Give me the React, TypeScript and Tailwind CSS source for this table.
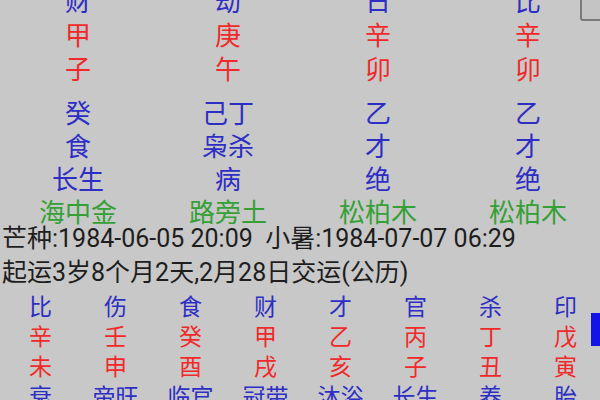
const RED = "text-[#f02a2a]";
const BLUE = "text-[#2e2ec4]";
const GREEN = "text-[#35a035]";

const top: { cells: string[]; color: string; h: string }[] = [
  { cells: ["财", "劫", "日", "比"], color: BLUE, h: "h-[34px]" },
  { cells: ["甲", "庚", "辛", "辛"], color: RED, h: "h-[34px]" },
  { cells: ["子", "午", "卯", "卯"], color: RED, h: "h-[34px]" },
];

const hidden: { cells: string[]; color: string }[] = [
  { cells: ["癸", "己丁", "乙", "乙"], color: BLUE },
  { cells: ["食", "枭杀", "才", "才"], color: BLUE },
  { cells: ["长生", "病", "绝", "绝"], color: BLUE },
  { cells: ["海中金", "路旁土", "松柏木", "松柏木"], color: GREEN },
];

const luck: { cells: string[]; color: string }[] = [
  { cells: ["比", "伤", "食", "财", "才", "官", "杀", "印"], color: BLUE },
  { cells: ["辛", "壬", "癸", "甲", "乙", "丙", "丁", "戊"], color: RED },
  { cells: ["未", "申", "酉", "戌", "亥", "子", "丑", "寅"], color: RED },
  { cells: ["衰", "帝旺", "临官", "冠带", "沐浴", "长生", "养", "胎"], color: BLUE },
];

export default function App() {
  return (
    <div
      className="relative h-[400px] w-[600px] overflow-hidden bg-[#c8c8c8]"
      style={{ fontFamily: 'Roboto, "Noto Sans CJK SC", sans-serif' }}
    >
      {/* four pillars */}
      <div className="-mt-[15px] pl-[3px]">
        {top.map((row, i) => (
          <div key={i} className={`grid grid-cols-[repeat(4,150px)] ${row.h} items-center text-[26px] ${row.color}`}>
            {row.cells.map((c, j) => (
              <div key={j} className="text-center leading-none">{c}</div>
            ))}
          </div>
        ))}
        <div className="h-[10px]" />
        {hidden.map((row, i) => (
          <div key={i} className={`grid h-[33px] grid-cols-[repeat(4,150px)] items-center text-[26px] ${row.color}`}>
            {row.cells.map((c, j) => (
              <div key={j} className="text-center leading-none">{c}</div>
            ))}
          </div>
        ))}
      </div>

      {/* jieqi + qiyun */}
      <div className="-mt-[8px] pl-[2px] text-[25px] text-[#1e1e1e]">
        <div className="flex h-[34px] items-center whitespace-pre leading-none">
          芒种:1984-06-05 20:09  小暑:1984-07-07 06:29
        </div>
        <div className="flex h-[34px] items-center whitespace-pre leading-none">
          起运3岁8个月2天,2月28日交运(公历)
        </div>
      </div>

      {/* da yun */}
      <div className="mt-[3px] pl-[3px]">
        {luck.map((row, i) => (
          <div key={i} className={`grid h-[30px] grid-cols-[repeat(8,75px)] items-center text-[23px] ${row.color}`}>
            {row.cells.map((c, j) => (
              <div key={j} className="text-center leading-none">{c}</div>
            ))}
          </div>
        ))}
      </div>

      {/* checkbox corner + scroll marker */}
      <div className="absolute right-[-6px] top-[-8px] h-[29px] w-[26px] rounded-[3px] border-2 border-[#7a7a7a] bg-[#c4c4c4]" />
      <div className="absolute right-0 top-[313px] h-[33px] w-[9px] bg-[#1414e6]" />
    </div>
  );
}
